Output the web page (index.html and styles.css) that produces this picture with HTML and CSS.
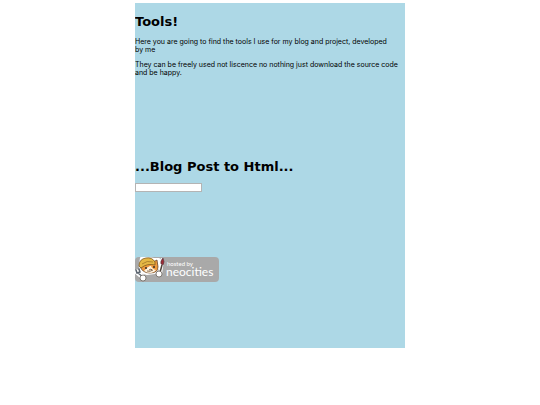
FILE: index.html
```html
<!DOCTYPE html>
<html>
<head>
    <meta charset="utf-8" />
    <title>Tools</title>
    <link rel="stylesheet" href="styles.css">
</head>
<body>

<h1>Tools!</h1>
<p>Here you are going to find the tools I use for my blog and project, developed<br>by me</p>
<p>They can be freely used not liscence no nothing just download the source code<br>and be happy.</p>

<!-- blog post converter -->
<div class="tool">
    <h1>...Blog Post to Html...</h1>
    <input class="post" type="text" aria-label="Blog post">
</div>

<a class="badge" href="https://neocities.org" aria-label="hosted by neocities">
    <svg width="84" height="25" viewBox="0 0 84 25">
        <rect width="84" height="25" rx="4" fill="#a9a9a9"/>
        <!-- cat -->
        <path d="M5 8L6 1L12 1L19 2L24 2L24 10L20 16L12 17L6 15Z" fill="#fff" stroke="#fff" stroke-width="2" stroke-linejoin="round"/>
        <path d="M5 9L7 3L10 4L18 5L22 3L23 10Q23 16 15 16Q7 16 5 9Z" fill="#ef9a3d" stroke="#65452b" stroke-width=".8"/>
        <path d="M15 9Q12 10 9 14Q12 16 16 16Q20 15 21 13Q17 12 16 9Z" fill="#fff3df"/>
        <path d="M4 9Q4 2 11 1Q17 0 20 5L20 8Q12 6 6 11Z" fill="#e5b845" stroke="#80591f" stroke-width=".8"/>
        <path d="M7 7Q12 3 18 5" fill="none" stroke="#a1762a" stroke-width=".8"/>
        <circle cx="11" cy="11" r="1" fill="#332b29"/>
        <circle cx="19" cy="10" r="1" fill="#332b29"/>
        <path d="M14 13L16 12L17 13M12 14Q15 15 18 13" fill="none" stroke="#65452b" stroke-width=".8"/>
        <!-- wrench -->
        <path d="M2 15L8 20" stroke="#fff" stroke-width="5" stroke-linecap="round"/>
        <path d="M1 13L2 16L5 15L4 12M3 16L8 20" fill="none" stroke="#5d6670" stroke-width="1.5" stroke-linecap="round"/>
        <circle cx="8" cy="21" r="3" fill="#fff" stroke="#59524b" stroke-width=".7"/>
        <!-- brush -->
        <path d="M27 3L25 17" stroke="#fff" stroke-width="4" stroke-linecap="round"/>
        <path d="M27 8L24 19" stroke="#4c4138" stroke-width="1.5"/>
        <path d="M26 7Q25 4 28 1Q30 5 28 8Z" fill="#a02c35" stroke="#44333a" stroke-width=".6"/>
        <circle cx="24" cy="17" r="3" fill="#fff" stroke="#59524b" stroke-width=".7"/>
        <text class="hosted" x="32" y="9">hosted by</text>
        <text class="neo" x="31" y="19">neocities</text>
    </svg>
</a>

</body>
</html>
```

FILE: styles.css
```css
html {
    background-color: white;
}

/* middle column */
body {
    width: 50%;
    margin: 3px auto;
    padding: 10px 0 66px;
    box-sizing: border-box;
    background-color: lightblue;
    color: black;
    font-family: Inter, Verdana, sans-serif;
    font-size: 7px;
    line-height: 8px;
}

h1 {
    margin: 0 0 7px;
    font-family: Verdana, "DejaVu Sans", sans-serif;
    font-size: 13px;
    line-height: 18px;
}

p {
    margin: 0 0 7px;
}

.tool {
    margin: 81px 0 65px;
}

.post {
    display: block;
    width: 67px;
    height: 9px;
    padding: 0;
    box-sizing: border-box;
    border: 1px solid #b4b4b4;
    background-color: white;
    font-size: 7px;
}

/* neocities link */
.badge {
    display: block;
    width: 84px;
}

.badge svg {
    display: block;
}

.hosted,
.neo {
    fill: white;
    font-family: Lato, "Open Sans", sans-serif;
}

.hosted {
    font-size: 6px;
}

.neo {
    font-size: 12px;
}
```
